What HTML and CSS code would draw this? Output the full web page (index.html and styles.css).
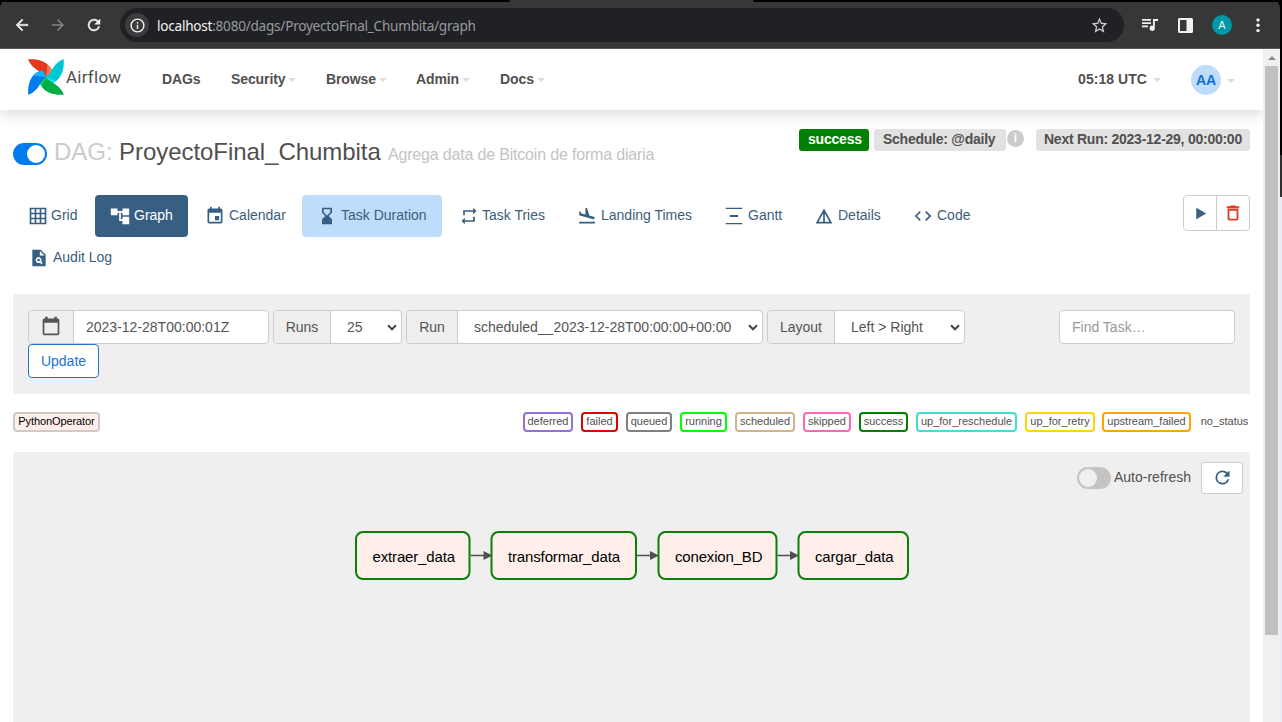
FILE: index.html
```html
<!DOCTYPE html>
<html lang="en">
<head>
<meta charset="utf-8">
<title>ProyectoFinal_Chumbita - Graph - Airflow</title>
<link rel="stylesheet" href="styles.css">
</head>
<body>
<div class="screen">
<div class="window">
  <header class="chrome">
    <div class="tab-strip"><span class="strip-left"></span><span class="strip-right"></span></div>
    <div class="toolbar">
      <svg class="tool back" viewBox="0 0 24 24"><path d="M20 11H7.83l5.59-5.59L12 4l-8 8 8 8 1.41-1.41L7.83 13H20z"/></svg>
      <svg class="tool forward" viewBox="0 0 24 24"><path d="M12 4l-1.41 1.41L16.17 11H4v2h12.17l-5.58 5.59L12 20l8-8z"/></svg>
      <svg class="tool reload" viewBox="0 0 24 24"><path d="M17.65 6.35C16.2 4.9 14.21 4 12 4a8 8 0 1 0 7.73 10h-2.08A6 6 0 1 1 12 6c1.66 0 3.14.69 4.22 1.78L13 11h7V4z"/></svg>
      <div class="omnibox">
        <span class="site-info"><svg viewBox="0 0 24 24"><path d="M11 17h2v-6h-2zm0-8h2V7h-2zM12 2a10 10 0 1 0 0 20 10 10 0 0 0 0-20zm0 18a8 8 0 1 1 0-16 8 8 0 0 1 0 16z"/></svg></span>
        <span class="url"><b>localhost</b>:8080/dags/ProyectoFinal_Chumbita/graph</span>
        <svg class="star" viewBox="0 0 24 24"><path d="M22 9.24l-7.19-.62L12 2 9.19 8.63 2 9.24l5.46 4.73L5.82 21 12 17.27 18.18 21l-1.63-7.03zM12 15.4l-3.76 2.27 1-4.28-3.32-2.88 4.38-.38L12 6.1l1.71 4.04 4.38.38-3.32 2.88 1 4.28z"/></svg>
      </div>
      <svg class="media" viewBox="0 0 16 14"><path d="M0 1h9v1.7H0zM0 4.3h9V6H0zM0 7.6h6v1.7H0zM11 1h5v2h-3.2v7.2a2.6 2.6 0 1 1-1.8-2.4z"/></svg>
      <svg class="panel" viewBox="0 0 15 15"><path fill-rule="evenodd" d="M1.5 0h12A1.5 1.5 0 0 1 15 1.500v12a1.500 1.500 0 0 1-1.500 1.500h-12A1.500 1.500 0 0 1 0 13.500v-12A1.500 1.500 0 0 1 1.500 0zM2 2v11h6.500V2z"/></svg>
      <span class="profile">A</span>
      <svg class="kebab" viewBox="0 0 4 15"><circle cx="2" cy="2" r="1.700"/><circle cx="2" cy="7.300" r="1.700"/><circle cx="2" cy="12.600" r="1.700"/></svg>
    </div>
  </header>

  <div class="viewport">
    <div class="page">
      <nav class="navbar">
        <div class="brand">
          <svg viewBox="0 0 36 36">
            <g fill="#e43921"><path d="M0 .3C9-.5 18 2 22 8c1.500 2 2 4 2.500 7L18 18C15 12.500 5 12 0 .3z"/><path fill="#ff7557" d="M19.500 5.500C23 8 24 11 24.500 15L18 18z"/></g>
            <g transform="rotate(90 18 18)"><path fill="#00c7d4" d="M0 .3C9-.5 18 2 22 8c1.500 2 2 4 2.500 7L18 18C15 12.500 5 12 0 .3z"/><path fill="#11e1ee" d="M22 8c1.500 2 2 4 2.500 7L18 18z"/></g>
            <g transform="rotate(180 18 18)"><path fill="#00ad46" d="M0 .3C9-.5 18 2 22 8c1.500 2 2 4 2.500 7L18 18C15 12.500 5 12 0 .3z"/><path fill="#04d659" d="M22 8c1.500 2 2 4 2.500 7L18 18z"/></g>
            <g transform="rotate(270 18 18)"><path fill="#017cee" d="M0 .3C9-.5 18 2 22 8c1.500 2 2 4 2.500 7L18 18C15 12.500 5 12 0 .3z"/><path fill="#0cb6ff" d="M19.500 5.500C23 8 24 11 24.500 15L18 18z"/></g>
          </svg>
          <span>Airflow</span>
        </div>
        <div class="menu">
          <span class="m-dags">DAGs</span>
          <span class="m-security">Security<i class="caret"></i></span>
          <span class="m-browse">Browse<i class="caret"></i></span>
          <span class="m-admin">Admin<i class="caret"></i></span>
          <span class="m-docs">Docs<i class="caret"></i></span>
        </div>
        <div class="user-area">
          <span class="clock">05:18 UTC<i class="caret"></i></span>
          <span class="avatar">AA</span><i class="caret"></i>
        </div>
      </nav>

      <main>
        <section class="heading">
          <h3><span class="switch on"></span><span class="muted">DAG:</span><span class="dag-name">ProyectoFinal_Chumbita</span><small>Agrega data de Bitcoin de forma diaria</small></h3>
          <div class="labels">
            <span class="label success-label">success</span>
            <span class="label schedule">Schedule: @daily</span>
            <span class="info">i</span>
            <span class="label next-run">Next Run: 2023-12-29, 00:00:00</span>
          </div>
        </section>

        <section class="views">
          <div class="tabs">
            <a class="t-grid"><svg viewBox="0 0 24 24"><path fill-rule="evenodd" d="M2 2h20v20H2zM4 4v4h4V4zM10 4v4h4V4zM16 4v4h4V4zM4 10v4h4v-4zM10 10v4h4v-4zM16 10v4h4v-4zM4 16v4h4v-4zM10 16v4h4v-4zM16 16v4h4v-4z"/></svg>Grid</a>
            <a class="t-graph active"><svg viewBox="0 0 24 24"><path d="M23 11V3h-8v3H9V3H1v8h8V8h2v10h4v4h8v-9h-8v3h-2V8h2v3z"/></svg>Graph</a>
            <a class="t-calendar"><svg viewBox="0 0 24 24"><path d="M17 12h-5v5h5zM16 1v2H8V1H6v2H5c-1.110 0-2 .9-2 2v14c0 1.100.89 2 2 2h14c1.100 0 2-.9 2-2V5c0-1.100-.9-2-2-2h-1V1zm3 18H5V8h14z"/></svg>Calendar</a>
            <a class="t-duration hover"><svg viewBox="0 0 24 24"><path d="M18 22v-6l-4-4 4-4V2H6v6l4 4-4 4v6zM8 7.500V4h8v3.500l-4 4z"/></svg>Task Duration</a>
            <a class="t-tries"><svg viewBox="0 0 24 24"><path d="M7 7h10v3l4-4-4-4v3H5v6h2zm10 10H7v-3l-4 4 4 4v-3h12v-6h-2z"/></svg>Task Tries</a>
            <a class="t-landing"><svg viewBox="0 0 24 24"><path d="M2.500 19h19v2h-19zm7.180-5.730l4.350 1.160 5.310 1.420c.8.21 1.620-.26 1.840-1.060.21-.8-.26-1.620-1.060-1.840l-5.310-1.420-2.760-9.020L10.120 2v8.280L5.150 8.950l-.93-2.320-1.450-.39v5.170l1.600.43z"/></svg>Landing Times</a>
            <a class="t-gantt"><svg viewBox="0 0 24 24"><path d="M22 2v1.500H2V2zM7 10.800v2.400h10v-2.400zM2 20.500V22h20v-1.500z"/></svg>Gantt</a>
            <a class="t-details"><svg viewBox="0 0 24 24"><path fill-rule="evenodd" d="M12 3l10 18H2zm1 6v10h5.500zM11 9L5.500 19H11z"/></svg>Details</a>
            <a class="t-code"><svg viewBox="0 0 24 24"><path d="M9.400 16.600L4.800 12l4.600-4.600L8 6l-6 6 6 6zm5.200 0l4.600-4.600-4.600-4.600L16 6l6 6-6 6z"/></svg>Code</a>
            <a class="t-audit"><svg viewBox="0 0 24 24"><circle cx="11.500" cy="14.500" r="1.600"/><path fill-rule="evenodd" d="M14 2H4v20h16V8zm1 17.450l-1.840-1.880c-1.330.71-3.010.53-4.130-.59a3.500 3.500 0 1 1 5.540-.82l1.880 1.880zM13 9V3.500L18.500 9z"/></svg>Audit Log</a>
          </div>
          <div class="actions">
            <span><svg class="play" viewBox="0 0 24 24"><path d="M6 4v16l14-8z"/></svg></span>
            <span><svg class="trash" viewBox="0 0 24 24"><path fill-rule="evenodd" d="M15.500 4l-1-1h-5l-1 1H4.500v2.200h15V4zM5.500 7v12c0 1.100.9 2 2 2h9c1.100 0 2-.9 2-2V7zm2.200 2.200h8.600v9.600H7.700z"/></svg></span>
          </div>
        </section>

        <form class="filters">
          <div class="group g-date"><span class="addon"><svg viewBox="0 0 24 24"><path d="M20 3h-1V1h-3v2H8V1H5v2H4c-1.100 0-2 .9-2 2v16c0 1.100.9 2 2 2h16c1.100 0 2-.9 2-2V5c0-1.100-.9-2-2-2zm0 18H4V8h16z"/></svg></span><span class="field">2023-12-28T00:00:01Z</span></div>
          <div class="group g-runs"><span class="addon">Runs</span><span class="field select">25<svg viewBox="0 0 10 7"><path d="M1 1.300l4 4 4-4"/></svg></span></div>
          <div class="group g-run"><span class="addon">Run</span><span class="field select">scheduled__2023-12-28T00:00:00+00:00<svg viewBox="0 0 10 7"><path d="M1 1.300l4 4 4-4"/></svg></span></div>
          <div class="group g-layout"><span class="addon">Layout</span><span class="field select">Left &gt; Right<svg viewBox="0 0 10 7"><path d="M1 1.300l4 4 4-4"/></svg></span></div>
          <div class="group g-find"><span class="field">Find Task…</span></div>
          <span class="update">Update</span>
        </form>

        <section class="legend">
          <span class="chip operator">PythonOperator</span>
          <div class="states">
            <span class="chip s-deferred">deferred</span>
            <span class="chip s-failed">failed</span>
            <span class="chip s-queued">queued</span>
            <span class="chip s-running">running</span>
            <span class="chip s-scheduled">scheduled</span>
            <span class="chip s-skipped">skipped</span>
            <span class="chip s-success">success</span>
            <span class="chip s-reschedule">up_for_reschedule</span>
            <span class="chip s-retry">up_for_retry</span>
            <span class="chip s-upstream">upstream_failed</span>
            <span class="chip s-none">no_status</span>
          </div>
        </section>

        <section class="canvas">
          <div class="refresh-bar"><span class="switch off"></span><span class="refresh-text">Auto-refresh</span><span class="refresh-btn"><svg viewBox="0 0 24 24"><path d="M17.650 6.350C16.200 4.900 14.210 4 12 4a8 8 0 1 0 7.730 10h-2.080A6 6 0 1 1 12 6c1.660 0 3.140.69 4.220 1.780L13 11h7V4z"/></svg></span></div>
          <svg class="graph" viewBox="0 0 1237 270">
            <g class="node">
              <rect x="343" y="80" width="113.500" height="47" rx="7"/>
              <rect x="478.500" y="80" width="144.500" height="47" rx="7"/>
              <rect x="645.500" y="80" width="118" height="47" rx="7"/>
              <rect x="785.500" y="80" width="109.500" height="47" rx="7"/>
            </g>
            <g class="edge">
              <path d="M457.500 103.500H472M624 103.500H639M764.500 103.500H780"/>
            </g>
            <path class="tip" d="M470.500 99l9 4.500-9 4.500zM637 99l9 4.500-9 4.500zM777 99l9 4.500-9 4.500z"/>
            <g class="node-label">
              <text x="359.500" y="110" textLength="82.500">extraer_data</text>
              <text x="495" y="110" textLength="112">transformar_data</text>
              <text x="662" y="110" textLength="87.500">conexion_BD</text>
              <text x="802" y="110" textLength="78.500">cargar_data</text>
            </g>
          </svg>
        </section>
      </main>
    </div>
    <div class="scrollbar"><i class="arrow"></i><div class="thumb"></div></div>
  </div>
</div>
<div class="desktop-edge"></div>
</div>
</body>
</html>
```
FILE: styles.css
```css
* { box-sizing: border-box; }
body { margin: 0; background: #000; overflow: hidden; font-family: "Liberation Sans", Arial, sans-serif; font-size: 14px; color: #51504f; }
svg { display: block; flex: none; fill: currentColor; }
.screen { display: flex; width: 1282px; height: 722px; overflow: hidden; }
.window { width: 1280px; display: flex; flex-direction: column; }
.desktop-edge { width: 2px; background: linear-gradient(#000 0 155px, #303030 155px 197px, #e9ecf5 197px); }

/* Browser toolbar */
.chrome { height: 49px; background: #363737; border-bottom: 1px solid #5a5a5a; border-radius: 8px 8px 0 0; overflow: hidden; }
.tab-strip { height: 2px; display: flex; justify-content: space-between; }
.strip-left, .strip-right { background: #000; }
.strip-left { width: 510px; border-radius: 0 0 5px 0; }
.strip-right { width: 527px; border-radius: 0 0 0 5px; }
.toolbar { height: 46px; display: flex; align-items: center; color: #f1f1f1; padding-left: 13px; }
.tool { width: 18px; height: 18px; }
.forward { margin-left: 18px; color: #858585; }
.reload { margin-left: 18px; }
.back, .reload { stroke: currentColor; stroke-width: .6; }
.omnibox { margin-left: 17px; width: 1004px; height: 34px; border-radius: 17px; background: #202124; display: flex; align-items: center; padding-left: 5px; }
.site-info { width: 24px; height: 24px; border-radius: 50%; background: #3b3c3e; display: grid; place-items: center; }
.site-info svg { width: 17px; height: 17px; }
.url { font: 13.6px "Noto Sans", "Open Sans", sans-serif; color: #969a9e; margin-left: 8px; width: 321px; white-space: nowrap; letter-spacing: -.25px; }
.url b { font-weight: 400; color: #f4f4f4; }
.star { width: 19px; height: 19px; color: #cfcfcf; margin-left: 612px; }
.media { width: 16px; height: 14px; margin-left: 18px; }
.panel { width: 15px; height: 15px; margin-left: 20px; }
.profile { width: 20px; height: 20px; border-radius: 50%; background: #0097a7; margin-left: 19px; text-align: center; font-size: 11px; line-height: 20px; }
.kebab { width: 4px; height: 15px; margin-left: 24px; }

.viewport { flex: 1; display: flex; min-height: 0; background: #fff; }
.page { width: 1263px; overflow: hidden; background: #fff; }
.scrollbar { width: 17px; background: #f0f0f0; padding: 7px 2px 0; display: flex; flex-direction: column; align-items: center; }
.arrow { border: 4px solid transparent; border-top: 0; border-bottom: 4px solid #8b8b8b; }
.thumb { width: 13px; height: 569px; margin-top: 6px; background: #c1c1c1; }

/* Airflow navigation */
.navbar { height: 61px; display: flex; align-items: center; background: #fff; box-shadow: 0 3px 15px rgba(0,0,0,.17); position: relative; padding-left: 28px; }
.brand { display: flex; width: 134px; height: 36px; margin-bottom: 5px; }
.brand svg { width: 36px; height: 36px; }
.brand span { font: 17px/36px Roboto, sans-serif; margin-left: 2px; letter-spacing: .25px; }
.menu, .clock { font-weight: 700; font-size: 14px; padding-bottom: 2px; }
.menu { display: flex; }
.menu span { display: flex; align-items: center; white-space: nowrap; letter-spacing: -.1px; }
.m-dags { width: 69px; } .m-security { width: 95px; } .m-browse { width: 90px; } .m-admin { width: 84px; } .m-docs { width: 50px; }
.caret { border: 4px solid transparent; border-top-color: #ddd; border-bottom: 0; margin-left: 3px; margin-top: 2px; }
.user-area { margin-left: auto; display: flex; align-items: center; padding-right: 28px; }
.clock { display: flex; align-items: center; margin-right: 30px; letter-spacing: .05px; }
.clock .caret { margin-left: 6px; }
.avatar { width: 30px; height: 30px; border-radius: 50%; background: #bfddfb; color: #0b6fd8; font-weight: 700; line-height: 31px; text-align: center; margin-right: 3px; }

main { padding: 0 13px; }
.heading { height: 85px; display: flex; justify-content: space-between; }
h3 { margin: 26px 0 0; height: 34px; display: flex; align-items: center; font-weight: 400; font-size: 24px; line-height: 34px; white-space: nowrap; }
.switch { width: 34px; height: 22px; border-radius: 11px; display: flex; padding: 2px; }
.switch::before { content: ""; width: 18px; height: 18px; border-radius: 50%; background: #fff; }
.on { background: #017cee; justify-content: flex-end; margin-top: 2px; }
.muted { color: #cbcbcb; margin-left: 7px; width: 65px; margin-top: -2px; }
.dag-name { width: 269px; margin-top: -2px; letter-spacing: -.05px; }
h3 small { font-size: 16px; color: #c4c3c2; margin-top: 3px; letter-spacing: -.18px; }
.labels { display: flex; margin-top: 19px; height: 22px; font-size: 14px; font-weight: 700; line-height: 21px; white-space: nowrap; }
.label { border-radius: 3px; background: #e2e2e2; padding-left: 8px; }
.success-label { width: 70px; background: #008000; color: #fff; margin-right: 5px; letter-spacing: -.2px; padding-left: 9px; }
.schedule { width: 132px; letter-spacing: -.25px; padding-left: 9px; }
.info { width: 17px; height: 17px; margin: 1px 12px 0 1px; border-radius: 50%; background: #cbcbcb; color: #fff; text-align: center; line-height: 17px; font-size: 12px; }
.next-run { width: 214px; letter-spacing: -.25px; }

.views { display: flex; height: 99px; justify-content: space-between; }
.tabs { display: flex; flex-wrap: wrap; width: 1100px; align-content: flex-start; color: #3b5e7c; }
.tabs a { height: 42px; display: flex; align-items: center; border-radius: 4px; padding-left: 15px; white-space: nowrap; padding-bottom: 2px; }
.tabs svg { width: 20px; height: 20px; margin-right: 4px; margin-top: 2px; color: #365f83; }
.tabs .t-grid { width: 82px; padding-left: 15px; }
.t-grid svg { margin-right: 3px !important; }
.t-graph { width: 93px; }
.tabs .t-calendar { width: 114px; padding-left: 17px; }
.t-duration { width: 140px; }
.tabs .t-tries { width: 119px; padding-left: 17px; }
.t-tries svg { margin-right: 3px !important; }
.tabs .t-landing { width: 147px; padding-left: 16px; }
.tabs .t-gantt { width: 91px; padding-left: 16px; }
.t-details { width: 98px; }
.tabs .t-code { width: 161px; padding-left: 16px; }
.tabs .t-audit { width: 110px; padding-left: 16px; }
.active, .active svg { background: #365f83; color: #fff !important; }
.hover { background: #bfddfb; }
.actions { display: flex; width: 67px; height: 36px; border: 1px solid #ccc; border-radius: 4px; }
.actions span { flex: 1; display: grid; place-items: center; }
.actions span + span { border-left: 1px solid #ccc; }
.play { width: 17px; height: 17px; color: #365f83; }
.trash { width: 20px; height: 20px; color: #dc3c28; }

/* Run filters */
.filters { height: 100px; background: #efefef; padding: 16px 15px; display: flex; flex-wrap: wrap; align-content: flex-start; border-radius: 2px; color: #555; }
.group { height: 34px; display: flex; margin-right: 4px; white-space: nowrap; border: 1px solid #ccc; border-radius: 4px; overflow: hidden; background: #fff; line-height: 32px; }
.addon { background: #eee; border-right: 1px solid #ccc; text-align: center; flex: none; }
.addon svg { width: 20px; height: 20px; margin: 5px auto; }
.field { padding-left: 12px; flex: 1; }
.select { display: flex; justify-content: space-between; align-items: center; padding: 0 4px 0 16px; }
.select svg { width: 10px; height: 7px; fill: none; stroke: #454545; stroke-width: 2; }
.g-date { width: 241px; } .g-date .addon { width: 45px; }
.g-runs { width: 129px; } .g-runs .addon { width: 57px; }
.g-run { width: 357px; } .g-run .addon { width: 51px; }
.g-layout { width: 198px; } .g-layout .addon { width: 67px; }
.g-find { width: 176px; margin-left: 90px; margin-right: 0; color: #999; }
.update { width: 71px; height: 34px; border: 1px solid #1c76cf; border-radius: 4px; background: #fff; color: #1c76cf; line-height: 32px; text-align: center; }

.legend { height: 58px; padding-top: 18px; display: flex; justify-content: space-between; }
.states { display: flex; }
.chip { height: 20px; border: 2px solid; border-radius: 4px; font-size: 11px; line-height: 15px; text-align: center; white-space: nowrap; display: flex; justify-content: center; }
.operator { width: 87px; background: #ffefeb; border-color: #cfc9c7; color: #000; letter-spacing: -.1px; }
.states .chip { color: #51504f; background: #fff; }
.states .s-deferred { width: 50px; border-color: #9370db; margin-right: 8px; }
.states .s-failed { width: 37px; border-color: #e00000; margin-right: 8px; }
.states .s-queued { width: 46px; border-color: #808080; margin-right: 8px; }
.states .s-running { width: 47px; border-color: #00ff00; margin-right: 8px; }
.states .s-scheduled { width: 60px; border-color: #d2b48c; margin-right: 8px; }
.states .s-skipped { width: 48px; border-color: #ff69b4; margin-right: 8px; }
.states .s-success { width: 49px; border-color: #008000; margin-right: 8px; }
.states .s-reschedule { width: 101px; border-color: #40e0d0; margin-right: 8px; }
.states .s-retry { width: 70px; border-color: #ffd700; margin-right: 7px; }
.states .s-upstream { width: 89px; border-color: #ffa500; margin-right: 8px; }
.states .s-none { width: 51px; border-color: transparent; }

.canvas { height: 270px; background: #efefef; border-radius: 4px 4px 0 0; position: relative; }
.graph { width: 1237px; height: 270px; }
.refresh-bar { position: absolute; right: 7px; top: 10px; height: 32px; display: flex; align-items: center; }
.off { background: #c6c4c3; }
.off::before { background: #efefef; }
.refresh-text { width: 87px; padding-left: 3px; padding-bottom: 2px; }
.refresh-btn { width: 42px; height: 32px; background: #fff; border: 1px solid #ccc; border-radius: 3px; display: grid; place-items: center; color: #365f83; margin-left: 3px; padding-bottom: 2px; }
.refresh-btn svg { width: 21px; height: 21px; }
.node rect { fill: #ffefeb; stroke: #0a800a; stroke-width: 2; }
.edge path { fill: none; stroke: #51504f; stroke-width: 1.3; }
.tip { fill: #51504f; }
.node-label { font-size: 15px; fill: #000; }
```
